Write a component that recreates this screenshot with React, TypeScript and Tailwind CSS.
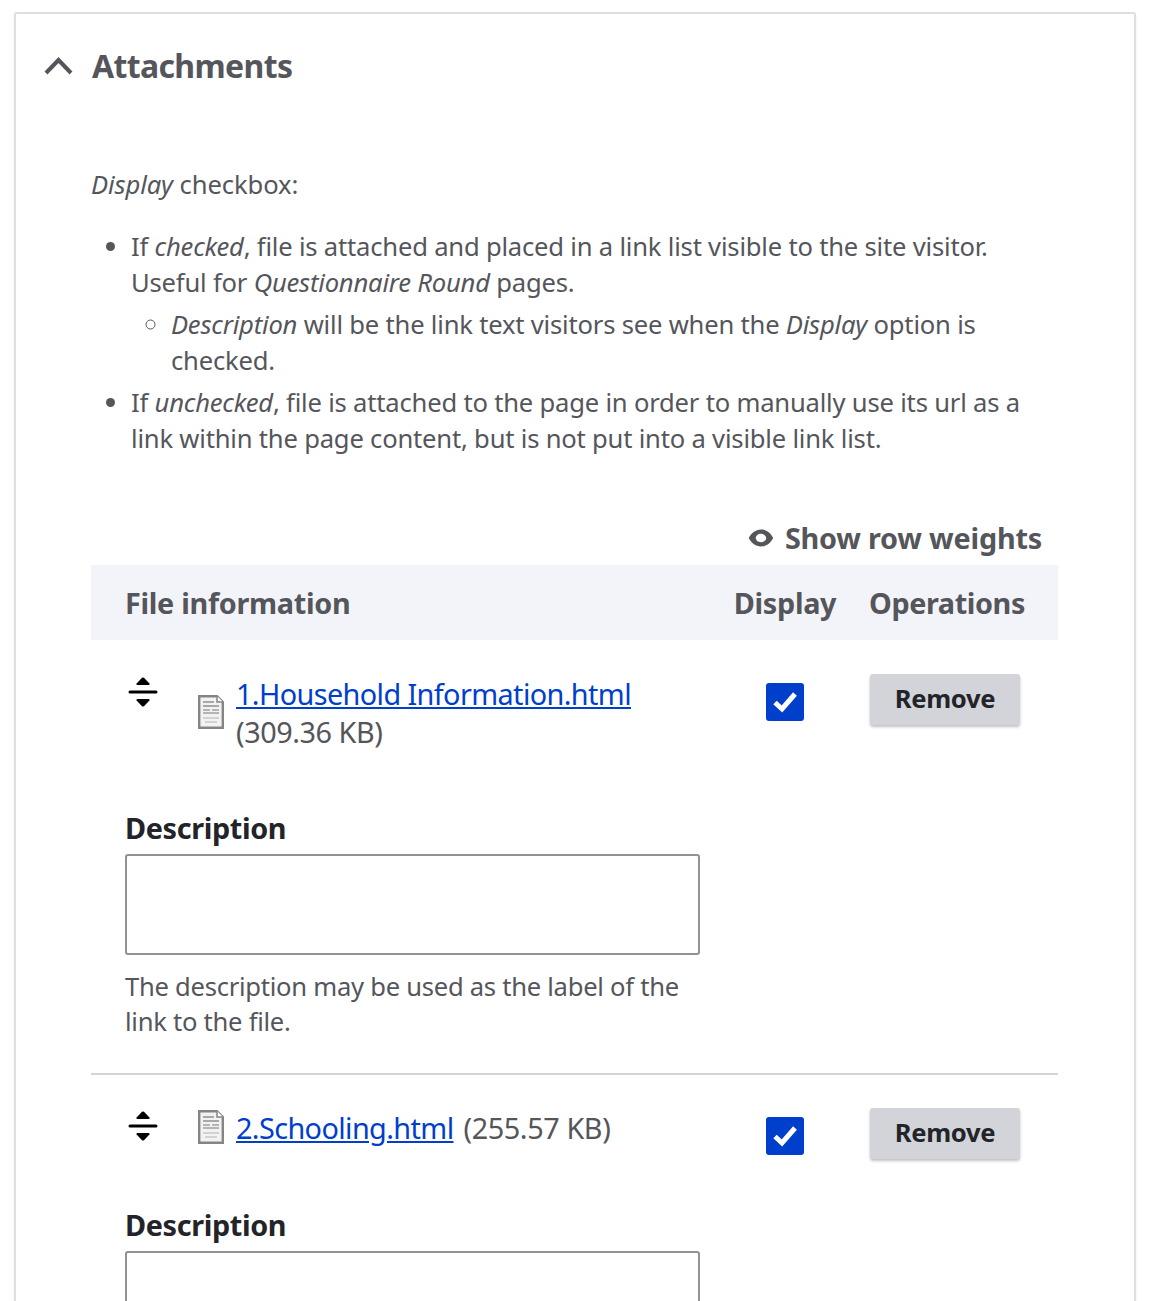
import type { ReactNode } from "react";

const FONT = "font-['Noto_Sans','Open_Sans',sans-serif]";

function DragHandle() {
  return (
    <svg width="30" height="30" viewBox="0 0 30 30" className="shrink-0">
      <path d="M14 .8 L8.600 6.400 Q7.800 8 9.500 8 L20.500 8 Q22.200 8 21.400 6.400 L16 .8 Q15 0 14 .8Z" fill="#000" />
      <rect x="0.500" y="13.500" width="29" height="3" rx="1.500" fill="#000" />
      <path d="M14 29.200 L8.600 23.600 Q7.800 22 9.500 22 L20.500 22 Q22.200 22 21.400 23.600 L16 29.200 Q15 30 14 29.200Z" fill="#000" />
    </svg>
  );
}

function FileIcon() {
  return (
    <svg width="26" height="34" viewBox="0 0 26 34" className="shrink-0">
      <path d="M1.200 1.200 H19 L24.800 7 V32.800 H1.200 Z" fill="#f2f2f2" stroke="#858585" strokeWidth="2.400" />
      <path d="M19 1 V7 H25" fill="#fff" stroke="#858585" strokeWidth="1.500" />
      <path d="M5 7 H16 M5 11 H21" stroke="#a8a8a8" strokeWidth="2" />
      <path d="M5 15 H12 M14 15 H21 M5 18 H21" stroke="#b5b5b5" strokeWidth="2" />
      <path d="M5 23 H21 M7 27 H19" stroke="#d2d2d2" strokeWidth="2" />
    </svg>
  );
}

function CheckedBox() {
  return (
    <span className="flex h-[38px] w-[38px] items-center justify-center rounded-[3px] bg-[#003ecc]">
      <svg width="26" height="22" viewBox="0 0 26 22">
        <path d="M3 11.500 L10 18 L23 3" fill="none" stroke="#fff" strokeWidth="5" />
      </svg>
    </span>
  );
}

function RemoveButton() {
  return (
    <button className="flex h-[51px] w-[150px] items-center justify-center rounded-[3px] bg-[#d3d4d9] pb-[1px] text-[25.600px] font-bold tracking-[-0.3px] text-[#232429] shadow-[0_2px_3px_rgba(0,0,0,0.25)]">
      Remove
    </button>
  );
}

function Row({ file, top, description, last }: { file: ReactNode; top: string; description?: ReactNode; last?: boolean }) {
  return (
    <div className={`grid grid-cols-[609px_170px_188px] ${last ? "" : "border-b-2 border-[#d3d4d9]"}`}>
      <div className={`pl-[34px] ${top}`}>
        {file}
        {description}
      </div>
      <div className={`flex justify-center ${top}`}>
        <div className="pt-[9px]">
          <CheckedBox />
        </div>
      </div>
      <div className={top}>
        <RemoveButton />
      </div>
    </div>
  );
}

function DescriptionField({ help }: { help?: boolean }) {
  return (
    <div>
      <div className="text-[28.800px] leading-[36px] font-bold tracking-[-0.36px] text-[#232429]">Description</div>
      <div className="mt-[8px] h-[101px] w-[575px] rounded-[3px] border-2 border-[#919297] bg-white" />
      {help && (
        <p className="mt-[14px] w-[575px] text-[25.600px] leading-[35px] tracking-[-0.27px] text-[#55565b]">
          The description may be used as the label of the link to the file.
        </p>
      )}
    </div>
  );
}

export default function App() {
  return (
    <div className={`h-[1301px] w-[1153px] overflow-hidden bg-white pt-[12px] pl-[14px] ${FONT}`}>
      <div className="h-[1400px] w-[1122px] rounded-[3px] border-2 border-[#dedfe4] bg-white text-[#55565b] shadow-[0_1px_2px_rgba(0,0,0,0.08)]">
        <div className="flex h-[104px] items-center pl-[27px]">
          <svg width="32" height="22" viewBox="0 0 32 22" className="mr-[17px]">
            <path d="M3 18 L15.500 5 L28 18" fill="none" stroke="#55565b" strokeWidth="4" />
          </svg>
          <h2 className="text-[32px] leading-[40px] font-bold tracking-[-0.65px]">Attachments</h2>
        </div>

        <div className="pl-[75px]">
          <p className="mt-[49px] text-[25.600px] leading-[36px] tracking-[-0.1px]">
            <em>Display</em> checkbox:
          </p>
          <ul className="mt-[26px] w-[930px] list-disc pl-[40px] text-[25.600px] leading-[36px] tracking-[-0.2px]">
            <li>
              If <em>checked</em>, file is attached and placed in a link list visible to the site visitor. Useful for{" "}
              <em>Questionnaire Round</em> pages.
              <ul className="mt-[6px] list-[circle] pl-[40px]">
                <li>
                  <em>Description</em> will be the link text visitors see when the <em>Display</em> option is checked.
                </li>
              </ul>
            </li>
            <li className="mt-[6px]">
              If <em>unchecked</em>, file is attached to the page in order to manually use its url as a link within the
              page content, but is not put into a visible link list.
            </li>
          </ul>

          <div className="mt-[57px] w-[967px]">
            <div className="flex h-[51px] items-center justify-end pr-[16px] pb-[3px]">
              <svg width="26" height="18" viewBox="0 0 26 18" className="mr-[11px]">
                <path
                  fillRule="evenodd"
                  d="M13 .5C7.500 .5 3 4.500 .8 9 3 13.500 7.500 17.500 13 17.500S23 13.500 25.200 9C23 4.500 18.500 .5 13 .5ZM13 4.800C16 4.800 18.200 6.800 18.200 9S16 13.200 13 13.200 7.800 11.200 7.800 9 10 4.800 13 4.800Z"
                  fill="#55565b"
                />
              </svg>
              <span className="text-[28.800px] leading-[36px] font-bold tracking-[-0.2px]">Show row weights</span>
            </div>

            <div className="grid h-[75px] grid-cols-[609px_170px_188px] items-center bg-[#f3f4f9] text-[28.800px] font-bold">
              <div className="pl-[34px] tracking-[-0.3px]">File information</div>
              <div className="text-center tracking-[-0.3px]">Display</div>
              <div className="-ml-[1px] tracking-[-0.4px]">Operations</div>
            </div>

            <Row
              top="pt-[34px]"
              file={
                <div className="flex">
                  <div className="pt-[3px] pl-[3px]">
                    <DragHandle />
                  </div>
                  <div className="ml-[40px] pt-[21px]">
                    <FileIcon />
                  </div>
                  <div className="ml-[12px] pt-[1px] text-[28.800px] leading-[38px] tracking-[-0.6px]">
                    <a className="block text-[#003ecc] underline">1.Household Information.html</a>
                    <span className="tracking-[-0.45px]">(309.36 KB)</span>
                  </div>
                </div>
              }
              description={
                <div className="mt-[59px] pb-[34px]">
                  <DescriptionField help />
                </div>
              }
            />
            <Row
              last
              top="pt-[33px]"
              file={
                <div className="flex">
                  <div className="pt-[3px] pl-[3px]">
                    <DragHandle />
                  </div>
                  <div className="ml-[40px] pt-[2px]">
                    <FileIcon />
                  </div>
                  <div className="ml-[12px] pt-[1px] text-[28.800px] leading-[38px] tracking-[-0.6px]">
                    <a className="text-[#003ecc] underline">2.Schooling.html</a>{" "}
                    <span className="ml-[3px] tracking-[-0.4px]">(255.57 KB)</span>
                  </div>
                </div>
              }
              description={
                <div className="mt-[60px]">
                  <DescriptionField />
                </div>
              }
            />
          </div>
        </div>
      </div>
    </div>
  );
}
